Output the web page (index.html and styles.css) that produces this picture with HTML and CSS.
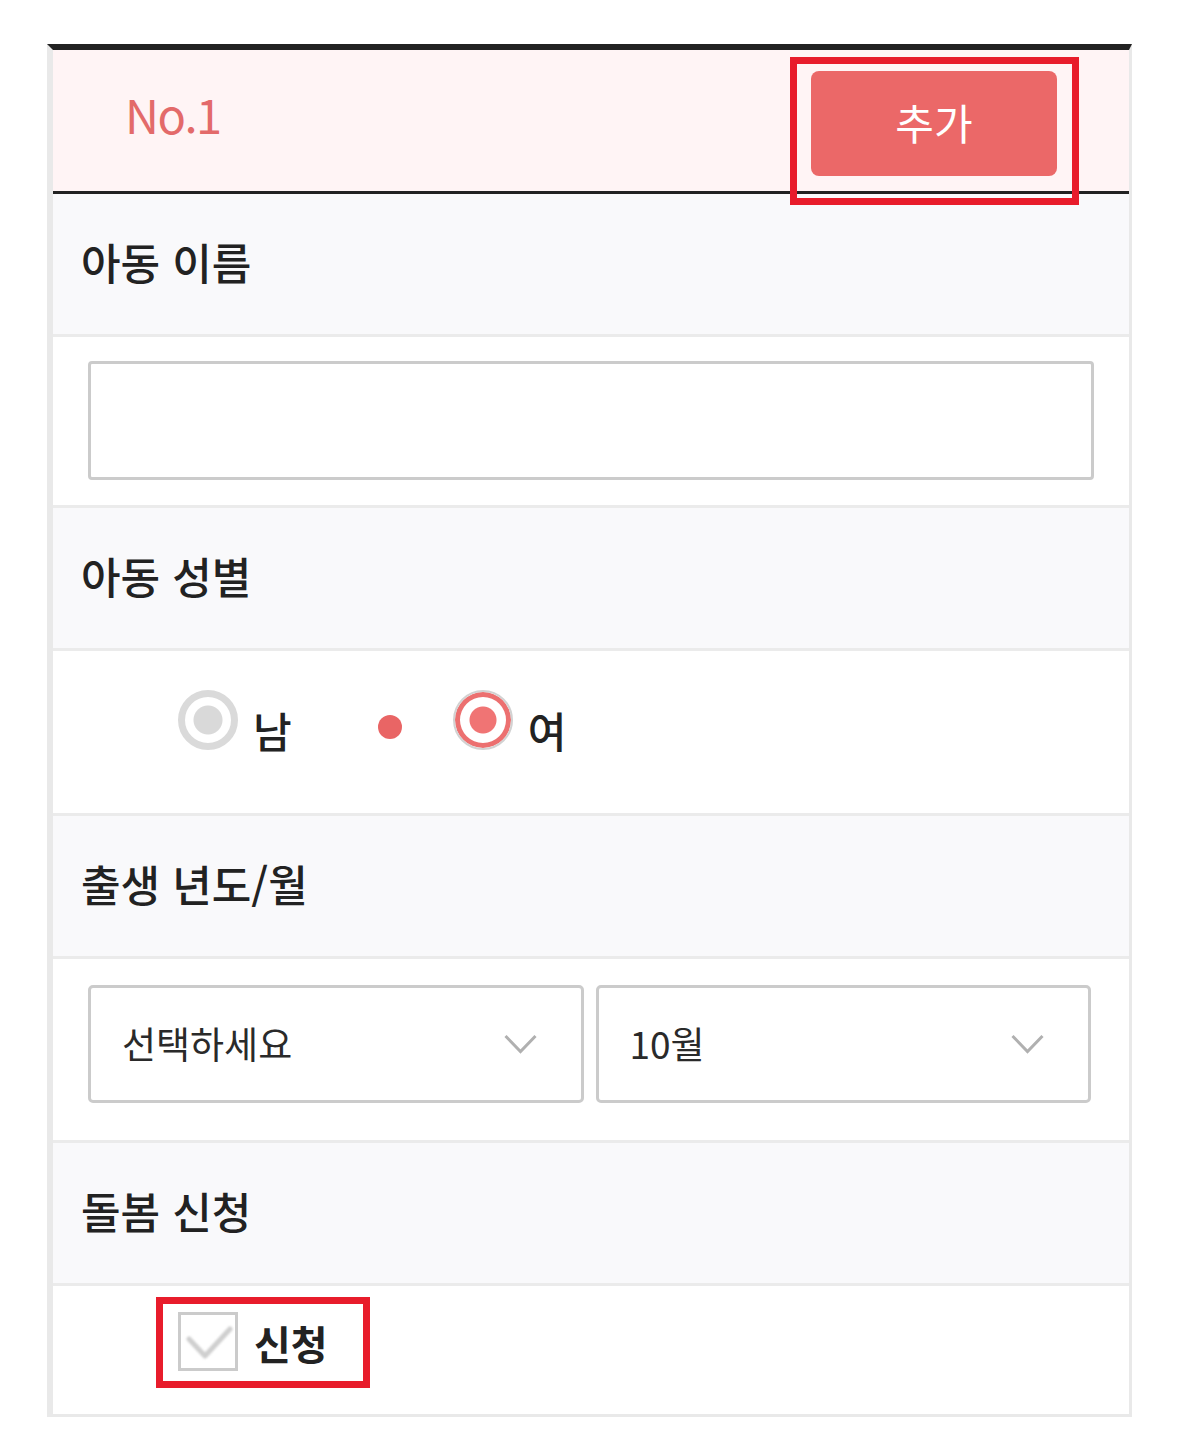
FILE: index.html
```html
<!DOCTYPE html>
<html lang="ko">
<head>
<meta charset="utf-8">
<title>아동 정보</title>
<link rel="stylesheet" href="styles.css">
</head>
<body>

<div class="card">
  <div class="card-head">
    <div class="no">No.1</div>
    <div class="marked marked-add">
      <button class="btn-add">추가</button>
    </div>
  </div>

  <div class="row label">아동 이름</div>
  <div class="row field">
    <div class="text-input"></div>
  </div>

  <div class="row label">아동 성별</div>
  <div class="row radios">
    <span class="radio off"></span>
    <span class="radio-text">남</span>
    <span class="dot"></span>
    <span class="radio on"></span>
    <span class="radio-text">여</span>
  </div>

  <div class="row label">출생 년도/월</div>
  <div class="row selects">
    <div class="select">
      <span>선택하세요</span>
      <svg class="chev" width="33" height="20" viewBox="0 0 33 20"><polyline points="1.5,2 16.5,17.5 31.5,2" fill="none" stroke="#b0b0b0" stroke-width="3"/></svg>
    </div>
    <div class="select">
      <span>10월</span>
      <svg class="chev" width="33" height="20" viewBox="0 0 33 20"><polyline points="1.5,2 16.5,17.5 31.5,2" fill="none" stroke="#b0b0b0" stroke-width="3"/></svg>
    </div>
  </div>

  <div class="row label">돌봄 신청</div>
  <div class="row check-row">
    <div class="marked marked-check">
      <span class="checkbox">
        <svg width="54" height="53" viewBox="0 0 54 53"><polyline points="8,24 24,41 49,14" fill="none" stroke="#cfcfcf" stroke-width="5" stroke-linecap="round" stroke-linejoin="round"/></svg>
      </span>
      <span class="check-text">신청</span>
    </div>
  </div>
</div>

</body>
</html>
```

FILE: styles.css
```css
body {
  margin: 0;
  background: #fff;
  font-family: "Noto Sans CJK KR", "Noto Sans", sans-serif;
  color: #222;
}

.card {
  margin: 44px 0 0 47px;
  width: 1076px;
  border-top: 6px solid #222;
  border-left: 6px solid #e9e9e9;
  border-right: 3px solid #e9e9e9;
  border-bottom: 3px solid #e9e9e9;
}

.card-head {
  height: 141px;
  background: #fff4f5;
  border-bottom: 3px solid #222;
  display: flex;
  align-items: center;
  justify-content: space-between;
  padding: 0 72px 0 72px;
}

.no {
  font-size: 47px;
  color: #e36a6a;
  letter-spacing: -1.5px;
  margin-top: -15px;
}

.btn-add {
  display: block;
  width: 246px;
  height: 105px;
  margin-top: 6px;
  border: 0;
  border-radius: 8px;
  background: #eb6868;
  color: #fff;
  font-family: inherit;
  font-size: 42px;
  padding: 0 0 4px;
}

/* red annotation frames */
.marked {
  position: relative;
}
.marked::after {
  content: "";
  position: absolute;
  border: 7px solid #e81c2b;
}
.marked-add::after {
  left: -21px;
  right: -22px;
  top: -8px;
  bottom: -29px;
}
.marked-check::after {
  left: -22px;
  right: -42px;
  top: -13px;
  bottom: -16px;
}

.row {
  border-bottom: 3px solid #ebebeb;
  box-sizing: border-box;
}

.label {
  height: 143px;
  background: #f9f9fb;
  display: flex;
  align-items: center;
  padding: 0 0 6px 28px;
  font-size: 43px;
  font-weight: 500;
  color: #222;
}

.field {
  height: 171px;
  padding: 24px 35px 0 35px;
}

.text-input {
  height: 119px;
  box-sizing: border-box;
  border: 3px solid #cbcbcb;
  border-radius: 4px;
  background: #fff;
}

.radios {
  height: 165px;
  display: flex;
  align-items: center;
  padding-left: 125px;
}

.radio {
  width: 60px;
  height: 60px;
  box-sizing: border-box;
  border-radius: 50%;
  margin-top: -24px;
  position: relative;
}
.radio.off {
  border: 7px solid #dadada;
  background: radial-gradient(circle, #d9d9d9 0 14px, #fff 15px);
}
.radio.on {
  border: 2px solid #d2d2d2;
  box-shadow: inset 0 0 0 5px #ec7070;
  background: radial-gradient(circle, #f07474 0 13px, #fff 14px);
}

.radio-text {
  font-size: 42px;
  font-weight: 500;
  margin-left: 15px;
  margin-top: -6px;
}

.dot {
  width: 24px;
  height: 24px;
  border-radius: 50%;
  background: #e96565;
  margin: -10px 51px 0 86px;
}

.selects {
  height: 184px;
  display: flex;
  gap: 12px;
  padding: 26px 38px 0 35px;
}

.select {
  flex: 1;
  height: 118px;
  box-sizing: border-box;
  border: 3px solid #cbcbcb;
  border-radius: 5px;
  display: flex;
  align-items: center;
  justify-content: space-between;
  padding: 0 44px 0 31px;
  font-size: 37px;
  color: #2a2a2a;
}
.select span {
  margin-top: -2px;
}

.check-row {
  height: 128px;
  border-bottom: 0;
  display: flex;
  align-items: flex-start;
  padding: 24px 0 0 125px;
}

.marked-check {
  display: flex;
  align-items: center;
}

.checkbox {
  width: 60px;
  height: 59px;
  box-sizing: border-box;
  border: 3px solid #cbcbcb;
  display: flex;
  align-items: center;
  justify-content: center;
}
.checkbox svg {
  filter: blur(0.8px);
}

.check-text {
  font-size: 40px;
  font-weight: 700;
  margin-left: 16px;
  margin-top: 4px;
}
```
